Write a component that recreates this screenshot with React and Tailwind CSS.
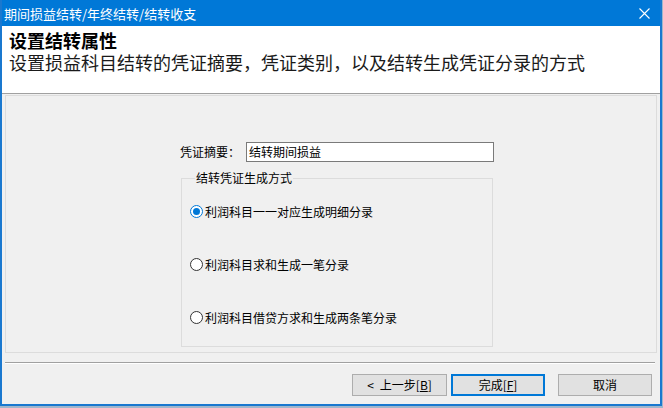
const FONT = { fontFamily: '"Noto Sans CJK SC", "Microsoft YaHei", sans-serif' }

const OPTIONS = [
  { label: '利润科目一一对应生成明细分录', checked: true },
  { label: '利润科目求和生成一笔分录', checked: false },
  { label: '利润科目借贷方求和生成两条笔分录', checked: false },
]

function Radio({ checked }) {
  if (checked) {
    return (
      <span className="w-[13px] h-[13px] rounded-full border border-[#0078d7] bg-white flex items-center justify-center shrink-0">
        <span className="w-[7px] h-[7px] rounded-full bg-[#0078d7]" />
      </span>
    )
  }
  return <span className="w-[13px] h-[13px] rounded-full border border-[#333333] bg-white shrink-0" />
}

export default function App() {
  return (
    <div className="w-[663px] h-[408px] bg-[#9fb6cc] overflow-hidden" style={FONT}>
      <div className="w-[662px] h-[406px] flex flex-col border-l-2 border-r-2 border-b-2 border-[#1a78cf] bg-[#f0f0f0]">
        {/* Title bar */}
        <div className="h-[26px] bg-[#0078d7] flex items-center justify-between pl-[2px] pr-[10px] shrink-0">
          <span className="text-white text-[13px] leading-none">期间损益结转/年终结转/结转收支</span>
          <svg width="11" height="11" viewBox="0 0 11 11">
            <path d="M0.5 0.5 L10.5 10.5 M10.5 0.5 L0.5 10.5" stroke="white" strokeWidth="1.1" />
          </svg>
        </div>

        {/* Header */}
        <div className="h-[68px] bg-white pl-[7px] pt-[3px] shrink-0 border-b border-[#a0a0a0]">
          <div className="text-[18px] font-bold leading-[22px] text-black">设置结转属性</div>
          <div className="text-[18px] leading-[22px] text-[#1a1a1a]">设置损益科目结转的凭证摘要，凭证类别，以及结转生成凭证分录的方式</div>
        </div>

        {/* Body */}
        <div className="flex-1 flex flex-col px-[3px] pt-[1px]">
          <div className="h-[258px] border border-[#dcdcdc] pl-[174px] pt-[46px]">
            <div className="flex items-center h-[20px]">
              <span className="text-[12px] text-black w-[66px]">凭证摘要：</span>
              <div className="w-[248px] h-[20px] bg-white border border-[#7a7a7a] flex items-center pl-[2px] text-[12px] text-black">
                结转期间损益
              </div>
            </div>
            <fieldset className="mt-[8px] ml-[1px] w-[312px] h-[177px] border border-[#dcdcdc] pl-[8px]">
              <legend className="ml-[5px] px-[1px] text-[12px] text-black leading-[16px]">结转凭证生成方式</legend>
              <div className="flex flex-col gap-[36px] pt-[17px]">
                {OPTIONS.map((o) => (
                  <div key={o.label} className="flex items-center gap-[2px] h-[17px]">
                    <Radio checked={o.checked} />
                    <span className="text-[12px] text-black">{o.label}</span>
                  </div>
                ))}
              </div>
            </fieldset>
          </div>

          <div className="mt-[9px] border-t border-[#a0a0a0] border-b border-b-white mr-[2px]" />

          <div className="flex pl-[347px] pt-[10px] gap-[4px]">
            <button className="w-[95px] h-[22px] bg-[#e1e1e1] border border-[#adadad] text-[12px] text-black flex items-center justify-center gap-[6px]">
              <span>&lt;</span>
              <span>上一步[<span className="underline">B</span>]</span>
            </button>
            <button className="w-[94px] h-[22px] bg-[#e1e1e1] border-2 border-[#0078d7] text-[12px] text-black flex items-center justify-center">
              完成[<span className="underline">F</span>]
            </button>
            <button className="ml-[9px] w-[94px] h-[22px] bg-[#e1e1e1] border border-[#adadad] text-[12px] text-black flex items-center justify-center">
              取消
            </button>
          </div>
        </div>
      </div>
    </div>
  )
}
